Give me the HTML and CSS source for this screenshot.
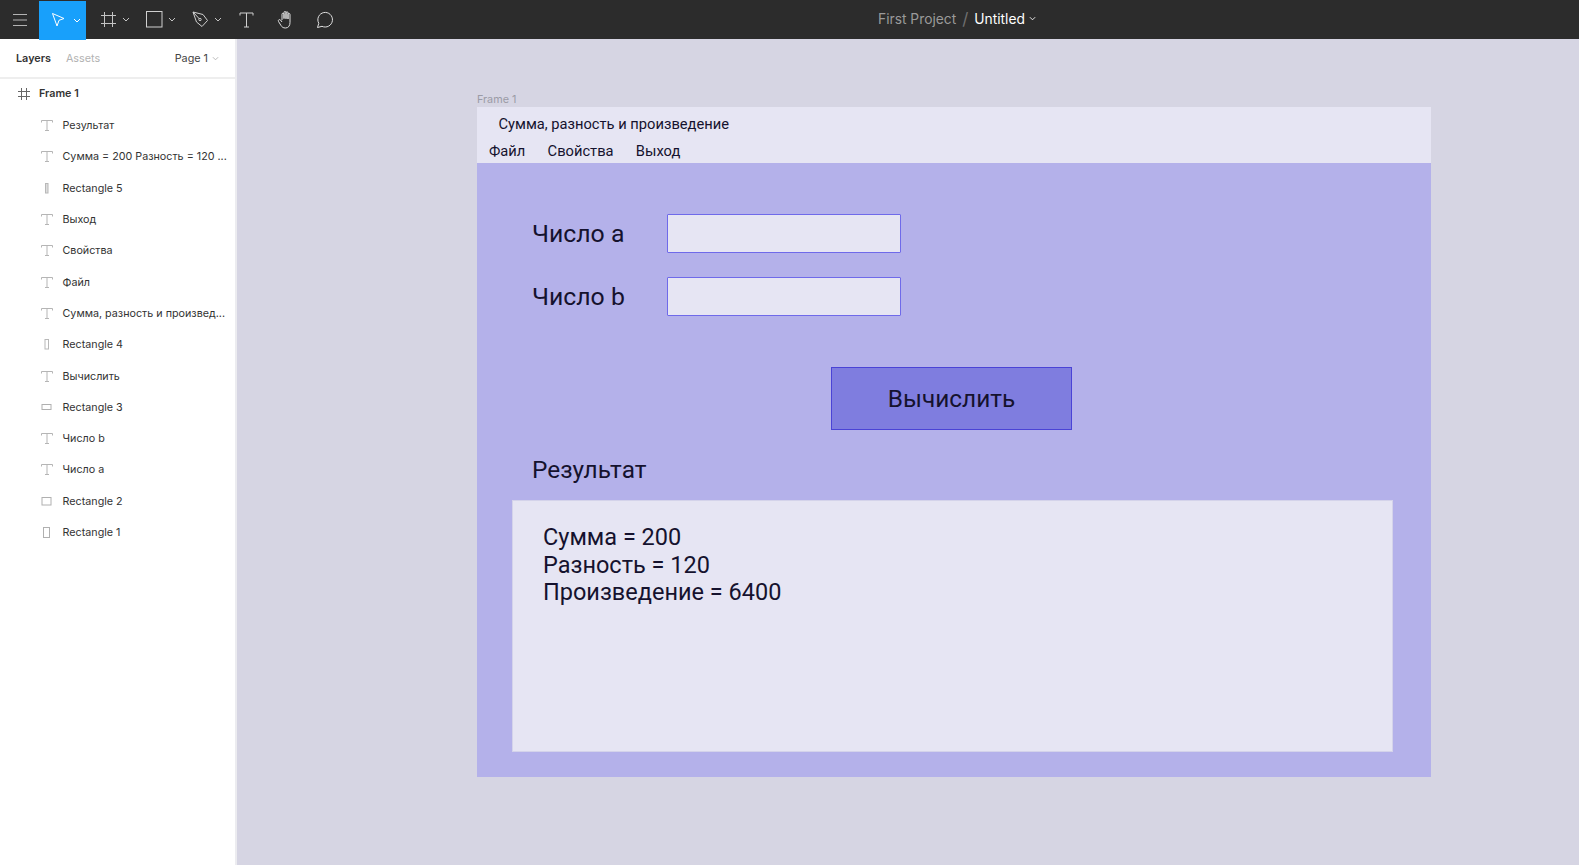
FILE: index.html
```html
<!DOCTYPE html>
<html>
<head>
    <meta charset="utf-8">
    <title>Untitled</title>
    <link rel="stylesheet" href="styles.css">
</head>
<body>
    <div class="toolbar">
        <div class="tools">
            <button class="tool menu-tool">
                <svg width="16" height="14" viewBox="0 0 16 14"><path d="M1 1.500h14M1 7h14M1 12.500h14" stroke="#b3b3b3" fill="none"/></svg>
            </button>
            <button class="tool move-tool">
                <svg width="16" height="16" viewBox="0 0 16 16"><path d="M2.500 1.500l11.500 5-5 1.800-2 5.700z" stroke="#fff" fill="none"/></svg>
                <svg class="caret" width="8" height="5" viewBox="0 0 8 5"><path d="M1 1l3 3 3-3" stroke="#fff" fill="none"/></svg>
            </button>
            <button class="tool frame-tool">
                <svg width="17" height="17" viewBox="0 0 17 17"><path d="M4.500 1v15M12.500 1v15M1 4.500h15M1 12.500h15" stroke="#c4c4c4" fill="none"/></svg>
                <svg class="caret" width="8" height="5" viewBox="0 0 8 5"><path d="M1 1l3 3 3-3" stroke="#c4c4c4" fill="none"/></svg>
            </button>
            <button class="tool rect-tool">
                <svg width="17" height="17" viewBox="0 0 17 17"><rect x="0.500" y="0.500" width="15.500" height="15.500" stroke="#d0d0d0" fill="none"/></svg>
                <svg class="caret" width="8" height="5" viewBox="0 0 8 5"><path d="M1 1l3 3 3-3" stroke="#c4c4c4" fill="none"/></svg>
            </button>
            <button class="tool pen-tool">
                <svg width="17" height="17" viewBox="0 0 17 17"><path d="M1 1l10 2.500 4.500 6-5.500 6-5.500-4.500zM1 1l6.500 7" stroke="#d0d0d0" fill="none"/><circle cx="8" cy="8.500" r="1.200" stroke="#d0d0d0" fill="none"/></svg>
                <svg class="caret" width="8" height="5" viewBox="0 0 8 5"><path d="M1 1l3 3 3-3" stroke="#c4c4c4" fill="none"/></svg>
            </button>
            <button class="tool text-tool">
                <svg width="15" height="16" viewBox="0 0 15 16"><path d="M1 3.500V1h13v2.500M7.500 1v14M5 15h5" stroke="#d0d0d0" fill="none"/></svg>
            </button>
            <button class="tool hand-tool">
                <svg width="18" height="19" viewBox="0 0 18 19"><path d="M5 10V4.200a1 1 0 0 1 2 0V9M7 8V2.500a1 1 0 0 1 2 0V9M9 8.500V2.800a1 1 0 0 1 2 0V9M11 9V4.500a1 1 0 0 1 2 0v8c0 3-1.500 5.500-4.500 5.500-2.500 0-3.500-1-4.500-2.500L1.500 11.500c-.8-1.500 1-2.500 2-1.500L5 12" stroke="#e0e0e0" fill="none"/></svg>
            </button>
            <button class="tool comment-tool">
                <svg width="18" height="18" viewBox="0 0 18 18"><path d="M1.500 16.500l1.300-4.200A7.300 7.300 0 1 1 6 15.300z" stroke="#e0e0e0" fill="none"/></svg>
            </button>
        </div>
        <div class="doc-title">
            <span class="project">First Project</span>
            <span class="slash">/</span>
            <span class="file">Untitled</span>
            <svg width="7" height="5" viewBox="0 0 8 5"><path d="M1 1l3 3 3-3" stroke="#fff" fill="none"/></svg>
        </div>
    </div>

    <div class="workspace">
        <div class="sidebar">
            <div class="side-tabs">
                <span class="tab-active">Layers</span>
                <span class="tab">Assets</span>
                <span class="page-pick">Page 1
                    <svg width="7" height="5" viewBox="0 0 8 5"><path d="M1 1l3 3 3-3" stroke="#b0b0b0" fill="none"/></svg>
                </span>
            </div>
            <div class="layer frame-layer">
                <svg width="12" height="12" viewBox="0 0 12 12"><path d="M3.500 0v12M8.500 0v12M0 3.500h12M0 8.500h12" stroke="#666" fill="none"/></svg>
                <span>Frame 1</span>
            </div>
            <div class="layer"><svg class="layer-icon" width="12" height="11" viewBox="0 0 12 11"><path d="M.5 2.500V.5h11v2M6 .5v10M4 10.500h4" stroke="#b5b5b5" fill="none"/></svg><span>Результат</span></div>
            <div class="layer"><svg class="layer-icon" width="12" height="11" viewBox="0 0 12 11"><path d="M.5 2.500V.5h11v2M6 .5v10M4 10.500h4" stroke="#b5b5b5" fill="none"/></svg><span>Сумма = 200 Разность = 120 ...</span></div>
            <div class="layer"><svg class="layer-icon" width="12" height="11" viewBox="0 0 12 11"><rect x="4.500" y="0.500" width="2.500" height="9.500" stroke="#b8b8b8" fill="#ddd"/></svg><span>Rectangle 5</span></div>
            <div class="layer"><svg class="layer-icon" width="12" height="11" viewBox="0 0 12 11"><path d="M.5 2.500V.5h11v2M6 .5v10M4 10.500h4" stroke="#b5b5b5" fill="none"/></svg><span>Выход</span></div>
            <div class="layer"><svg class="layer-icon" width="12" height="11" viewBox="0 0 12 11"><path d="M.5 2.500V.5h11v2M6 .5v10M4 10.500h4" stroke="#b5b5b5" fill="none"/></svg><span>Свойства</span></div>
            <div class="layer"><svg class="layer-icon" width="12" height="11" viewBox="0 0 12 11"><path d="M.5 2.500V.5h11v2M6 .5v10M4 10.500h4" stroke="#b5b5b5" fill="none"/></svg><span>Файл</span></div>
            <div class="layer"><svg class="layer-icon" width="12" height="11" viewBox="0 0 12 11"><path d="M.5 2.500V.5h11v2M6 .5v10M4 10.500h4" stroke="#b5b5b5" fill="none"/></svg><span>Сумма, разность и произвед...</span></div>
            <div class="layer"><svg class="layer-icon" width="12" height="11" viewBox="0 0 12 11"><rect x="4" y="0.500" width="3.500" height="9.500" stroke="#b8b8b8" fill="none"/></svg><span>Rectangle 4</span></div>
            <div class="layer"><svg class="layer-icon" width="12" height="11" viewBox="0 0 12 11"><path d="M.5 2.500V.5h11v2M6 .5v10M4 10.500h4" stroke="#b5b5b5" fill="none"/></svg><span>Вычислить</span></div>
            <div class="layer"><svg class="layer-icon" width="12" height="11" viewBox="0 0 12 11"><rect x="1" y="2.500" width="9" height="5" stroke="#b0b0b0" fill="none"/></svg><span>Rectangle 3</span></div>
            <div class="layer"><svg class="layer-icon" width="12" height="11" viewBox="0 0 12 11"><path d="M.5 2.500V.5h11v2M6 .5v10M4 10.500h4" stroke="#b5b5b5" fill="none"/></svg><span>Число b</span></div>
            <div class="layer"><svg class="layer-icon" width="12" height="11" viewBox="0 0 12 11"><path d="M.5 2.500V.5h11v2M6 .5v10M4 10.500h4" stroke="#b5b5b5" fill="none"/></svg><span>Число a</span></div>
            <div class="layer"><svg class="layer-icon" width="12" height="11" viewBox="0 0 12 11"><rect x="1" y="1.500" width="9" height="7.500" stroke="#b0b0b0" fill="none"/></svg><span>Rectangle 2</span></div>
            <div class="layer"><svg class="layer-icon" width="12" height="11" viewBox="0 0 12 11"><rect x="2.500" y="0.500" width="6" height="10" stroke="#b0b0b0" fill="none"/></svg><span>Rectangle 1</span></div>
        </div>

        <div class="canvas">
            <div class="frame-wrap">
                <div class="frame-name">Frame 1</div>
                <div class="frame">
                    <div class="win-head">
                        <div class="win-title">Сумма, разность и произведение</div>
                        <div class="win-menu">
                            <span>Файл</span>
                            <span>Свойства</span>
                            <span>Выход</span>
                        </div>
                    </div>
                    <div class="win-body">
                        <div class="field">
                            <div class="field-label">Число a</div>
                            <div class="field-input"></div>
                        </div>
                        <div class="field">
                            <div class="field-label">Число b</div>
                            <div class="field-input"></div>
                        </div>
                        <div class="calc-btn">Вычислить</div>
                        <div class="result-label">Результат</div>
                        <div class="result-box">
                            Сумма = 200<br>
                            Разность = 120<br>
                            Произведение = 6400
                        </div>
                    </div>
                </div>
            </div>
        </div>
    </div>
</body>
</html>
```

FILE: styles.css
```css
html, body {
    margin: 0;
    height: 100%;
    overflow: hidden;
}
body {
    font-family: Inter, "Noto Sans", sans-serif;
    background: #d6d5e3;
}
.toolbar {
    height: 39px;
    background: #2c2c2c;
    display: flex;
    align-items: center;
    position: relative;
}
.tools {
    display: flex;
    height: 38px;
}
.tool {
    border: 0;
    padding: 0;
    background: none;
    display: flex;
    align-items: center;
    justify-content: center;
    height: 38px;
}
.menu-tool { width: 39px; }
.move-tool { width: 47px; height: 39px; background: #18a0fb; gap: 7px; padding-left: 6px; }
.frame-tool { width: 46px; gap: 5px; margin-left: 14px; justify-content: flex-start; }
.rect-tool { width: 46px; gap: 5px; justify-content: flex-start; }
.pen-tool { width: 46px; gap: 5px; justify-content: flex-start; }
.text-tool { width: 15px; margin-left: 1px; }
.hand-tool { width: 18px; margin-left: 23px; }
.comment-tool { width: 18px; margin-left: 21px; }
.doc-title {
    position: absolute;
    left: 878px;
    top: -1px;
    height: 39px;
    display: flex;
    align-items: center;
    font-size: 13.800px;
}
.project { color: #9a9a9a; }
.slash { color: #6f6f6f; margin: 0 6px; font-size: 17px; }
.file { color: #fff; margin-right: 4px; }

.workspace {
    display: flex;
    height: 826px;
}
.sidebar {
    width: 235px;
    background: #fff;
    border-right: 2px solid #ececf0;
    flex-shrink: 0;
}
.side-tabs {
    height: 38px;
    border-bottom: 2px solid #eeeeee;
    display: flex;
    align-items: center;
    padding: 0 16px;
    font-size: 10.800px;
}
.tab-active { font-weight: 600; color: #333; }
.tab { color: #b3b3b3; margin-left: 15px; }
.page-pick {
    margin-left: auto;
    color: #444;
    display: flex;
    align-items: center;
    gap: 4px;
}
.layer {
    height: 31.300px;
    display: flex;
    align-items: center;
    padding-left: 41px;
    font-size: 10.750px;
    color: #333;
    white-space: nowrap;
}
.layer-icon { margin-right: 9.500px; }
.frame-layer {
    padding-left: 18px;
    font-weight: 600;
    height: 29px;
    margin-bottom: 2px;
}
.frame-layer span { margin-left: 9px; }

.canvas {
    flex: 1;
    padding: 53px 0 0 240px;
}
.frame-name {
    font-size: 10.800px;
    color: #9b9ba6;
    height: 15px;
    line-height: 15px;
}
.frame {
    width: 954px;
    height: 670px;
    display: flex;
    flex-direction: column;
    font-family: Roboto, sans-serif;
    color: #15122e;
}
.win-head {
    height: 56px;
    background: #e6e5f3;
    font-size: 14.700px;
}
.win-title {
    padding: 8px 0 0 21.500px;
    line-height: 18px;
}
.win-menu {
    display: flex;
    gap: 22.300px;
    padding: 9px 0 0 12px;
    line-height: 18px;
}
.win-body {
    flex: 1;
    background: #b4b1ea;
    padding: 51px 38px 25px 35px;
    display: flex;
    flex-direction: column;
}
.field {
    display: flex;
    align-items: center;
    margin-bottom: 24px;
    padding-left: 20px;
}
.field-label {
    width: 135px;
    font-size: 24.800px;
}
.field-input {
    width: 232px;
    height: 37px;
    background: #e6e5f3;
    border: 1.500px solid #6f6aea;
    border-radius: 1px;
}
.calc-btn {
    width: 239px;
    height: 61px;
    margin: 27px 0 0 319px;
    background: #7f7ddf;
    border: 1px solid #4a43d6;
    display: flex;
    align-items: center;
    justify-content: center;
    font-size: 24.400px;
}
.result-label {
    font-size: 24.400px;
    line-height: 30px;
    margin: 25px 0 15px 20px;
}
.result-box {
    flex: 1;
    background: #e6e5f3;
    border: 1px solid #d4d3ea;
    font-size: 23.500px;
    line-height: 27.500px;
    padding: 23px 0 0 30px;
}
```
